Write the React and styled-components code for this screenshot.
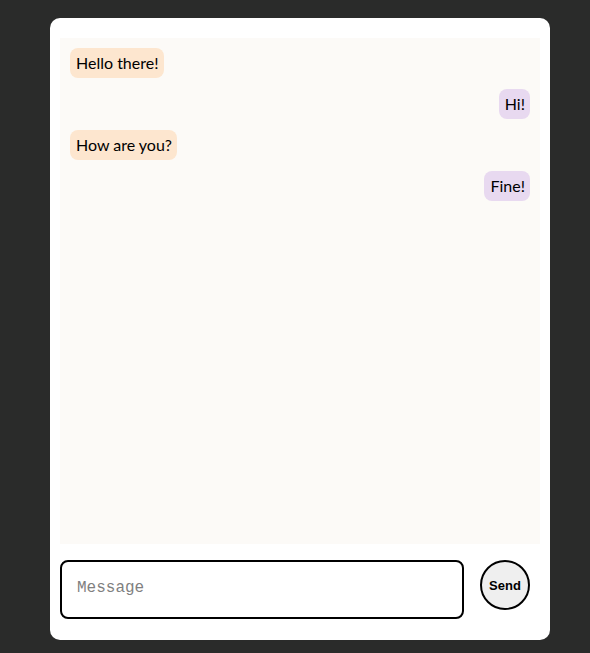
import styled, { createGlobalStyle } from "styled-components";

const GlobalStyle = createGlobalStyle`
  html, body {
    margin: 0;
    padding: 0;
    background: #2a2b2a;
    height: 100%;
  }
`;

const messages = [
  { id: 1, text: "Hello there!", mine: false },
  { id: 2, text: "Hi!", mine: true },
  { id: 3, text: "How are you?", mine: false },
  { id: 4, text: "Fine!", mine: true },
];

export default function App() {
  return (
    <>
      <GlobalStyle />
      <Page>
        <Card>
          <ChatArea>
            {messages.map((m) => (
              <Row key={m.id} $mine={m.mine}>
                <Bubble $mine={m.mine}>{m.text}</Bubble>
              </Row>
            ))}
          </ChatArea>
          <InputRow>
            <MessageInput placeholder="Message" />
            <SendButton>Send</SendButton>
          </InputRow>
        </Card>
      </Page>
    </>
  );
}

const Page = styled.div`
  padding: 18px 40px 0 50px;
`;

const Card = styled.div`
  width: 500px;
  height: 622px;
  box-sizing: border-box;
  background: #ffffff;
  border-radius: 10px;
  padding: 20px 10px 21px 10px;
  display: flex;
  flex-direction: column;
  gap: 16px;
`;

const ChatArea = styled.div`
  flex: 1;
  background: #fcfaf7;
  padding: 10px;
  display: flex;
  flex-direction: column;
  gap: 11px;
`;

const Row = styled.div`
  display: flex;
  justify-content: ${(p) => (p.$mine ? "flex-end" : "flex-start")};
`;

const Bubble = styled.div`
  font-family: Lato, "Open Sans", sans-serif;
  font-size: 16px;
  line-height: 20px;
  color: #000;
  padding: 5px 5px 5px 6px;
  border-radius: 8px;
  background: ${(p) => (p.$mine ? "#e8d9f0" : "#fde6cf")};
`;

const InputRow = styled.div`
  display: flex;
  align-items: flex-start;
  gap: 16px;
  padding-right: 10px;
`;

const MessageInput = styled.input`
  flex: 1;
  height: 59px;
  box-sizing: border-box;
  border: 2px solid #000;
  border-radius: 8px;
  padding: 0 15px 4px 15px;
  font-family: "Liberation Mono", monospace;
  font-size: 16px;
  outline: none;

  &::placeholder {
    color: #808080;
  }
`;

const SendButton = styled.button`
  width: 50px;
  height: 50px;
  border-radius: 50%;
  border: 2px solid #000;
  background: #efefef;
  padding: 0;
  font-family: "Liberation Sans", Arial, sans-serif;
  font-weight: bold;
  font-size: 13px;
  color: #000;
  cursor: pointer;
`;
